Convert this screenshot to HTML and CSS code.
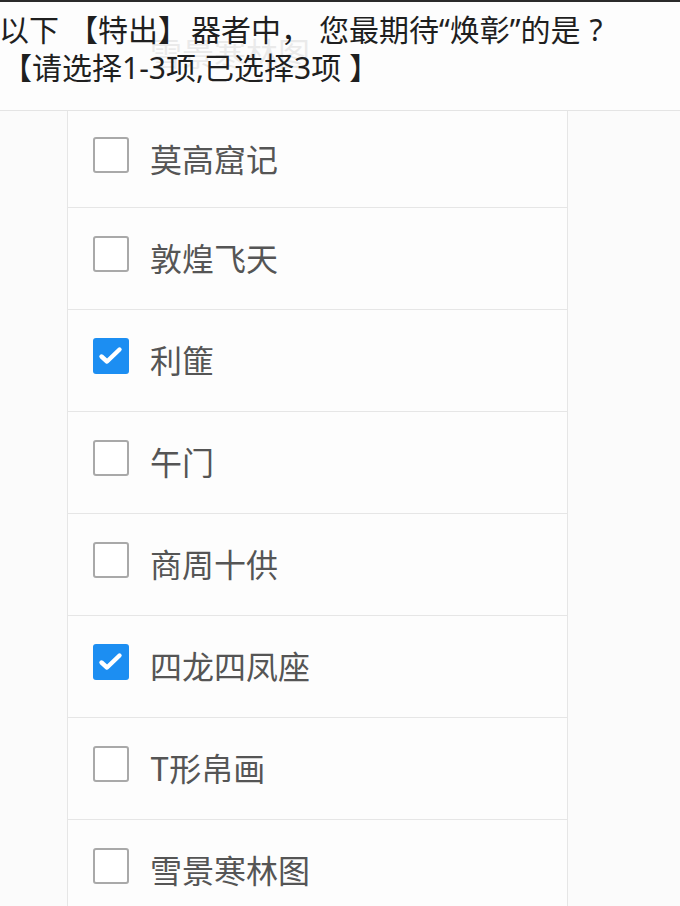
FILE: index.html
```html
<!DOCTYPE html>
<html lang="zh-CN">
<head>
<meta charset="utf-8">
<link rel="stylesheet" href="styles.css">
</head>
<body>
<div class="screen">
  <header class="question">
    <div class="q-line q-first">以下<span class="open">【</span>特出<span class="close">】</span>器者中<span class="comma">，</span>您最期待“焕彰”的是<span class="qm">?</span></div>
    <div class="q-line q-second">【请选择1-3项,已选择3项<span class="end">】</span></div>
    <span class="ghost" aria-hidden="true">雪景寒林图</span>
  </header>
  <div class="list-wrap">
    <ul class="list">
      <li class="row"><span class="box"></span><span class="label">莫高窟记</span></li>
      <li class="row"><span class="box"></span><span class="label">敦煌飞天</span></li>
      <li class="row"><span class="box checked"><svg viewBox="0 0 36 36" width="36" height="36"><path d="M8.5 18.5 L14 23.5 L26.5 11.5" fill="none" stroke="#fff" stroke-width="4.4" stroke-linecap="round" stroke-linejoin="round"/></svg></span><span class="label">利篚</span></li>
      <li class="row"><span class="box"></span><span class="label">午门</span></li>
      <li class="row"><span class="box"></span><span class="label">商周十供</span></li>
      <li class="row"><span class="box checked"><svg viewBox="0 0 36 36" width="36" height="36"><path d="M8.5 18.5 L14 23.5 L26.5 11.5" fill="none" stroke="#fff" stroke-width="4.4" stroke-linecap="round" stroke-linejoin="round"/></svg></span><span class="label">四龙四凤座</span></li>
      <li class="row"><span class="box"></span><span class="label">T形帛画</span></li>
      <li class="row"><span class="box"></span><span class="label">雪景寒林图</span></li>
    </ul>
  </div>
</div>
</body>
</html>
```

FILE: styles.css
```css
* { box-sizing: border-box; }
html, body {
  margin: 0;
  padding: 0;
  background: #fbfbfb;
  font-family: "Noto Sans CJK SC", "Noto Sans", sans-serif;
}
.screen {
  width: 680px;
  height: 906px;
  overflow: hidden;
  border-top: 2px solid #2a2a2a;
  background: #fbfbfb;
}
.question {
  position: relative;
  height: 109px;
  padding-top: 9px;
  border-bottom: 1px solid #e4e4e4;
  font-family: "Noto Sans", "Noto Sans CJK SC", sans-serif;
  font-size: 30px;
  line-height: 38px;
  color: #1f1f1f;
  background: #fdfdfd;
}
.q-line {
  position: relative;
  z-index: 1;
  white-space: nowrap;
}
.q-first {
  margin-left: -1px;
}
.q-second {
  margin-left: 2px;
}
.open {
  margin-left: 9px;
}
.close {
  margin-right: 3px;
}
.comma {
  margin-right: 8px;
}
.qm {
  margin-left: 9px;
}
.end {
  margin-left: 8px;
}
.ghost {
  position: absolute;
  left: 150px;
  top: 30px;
  font-family: "Noto Sans CJK SC", sans-serif;
  font-size: 32px;
  line-height: 40px;
  color: #000;
  opacity: 0.07;
}
.list-wrap {
  display: flex;
  padding-left: 67px;
}
.list {
  list-style: none;
  margin: 0;
  padding: 0;
  width: 501px;
  border-left: 1px solid #e6e6e6;
  border-right: 1px solid #e6e6e6;
  background: #fdfdfd;
}
.row {
  display: flex;
  align-items: center;
  gap: 21px;
  height: 102px;
  padding: 0 0 9px 25px;
  border-bottom: 1px solid #e6e6e6;
}
.row:first-child {
  height: 97px;
}
.box {
  flex: none;
  width: 36px;
  height: 36px;
  border: 2px solid #a9a9a9;
  border-radius: 3px;
  background: #fff;
  display: flex;
  align-items: center;
  justify-content: center;
}
.box.checked {
  border: none;
  background: #1c8ef2;
}
.label {
  font-size: 32px;
  line-height: 40px;
  color: #555;
  margin-top: 6px;
}
```
